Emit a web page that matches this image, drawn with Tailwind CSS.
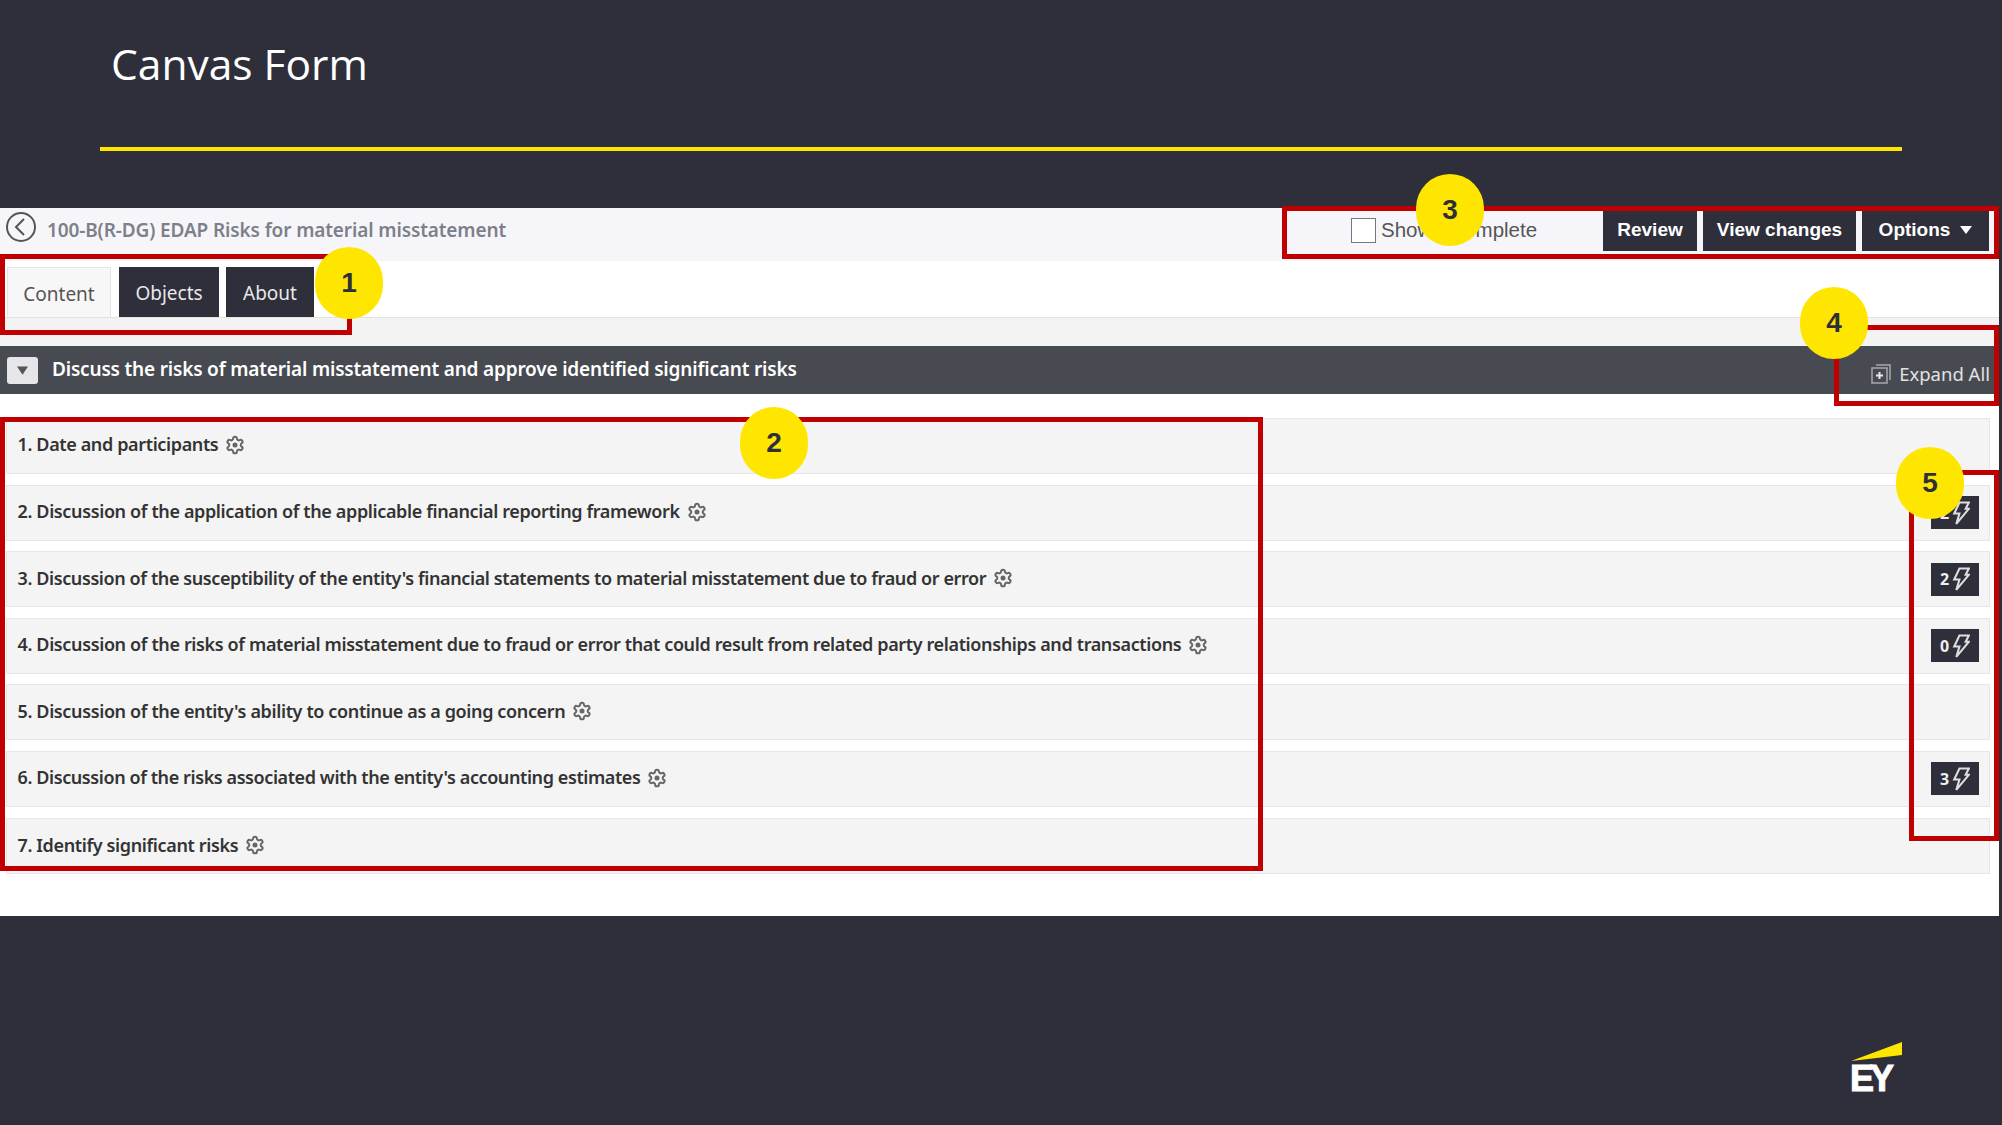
<!DOCTYPE html>
<html lang="en">
<head>
  <meta charset="UTF-8">
  <title>Canvas Form</title>
  <script src="https://cdn.jsdelivr.net/npm/@tailwindcss/browser@4"></script>
</head>
<body class="bg-[#2e2f3a] w-[2002px] h-[1125px] overflow-hidden relative font-['Noto_Sans',sans-serif]">
  <!-- slide header -->
  <header class="h-[208px] pl-[100px] pr-[100px] pt-[33px]">
    <h1 class="pl-[11px] text-[42.500px] leading-[62px] text-white font-['Open_Sans',sans-serif]">Canvas Form</h1>
    <div class="mt-[52px] h-[4px] bg-[#ffe600]"></div>
  </header>

  <!-- screenshot panel -->
  <main class="w-[1999px] h-[708px] bg-white">
    <div class="h-[53px] bg-[#f6f6fa] flex items-start pt-[3px] pl-[6px] pr-[10px]">
      <svg class="w-[30px] h-[30px] mt-[1px]" viewBox="0 0 30 30" fill="none" stroke="#555" stroke-width="2"><circle cx="15" cy="15" r="14"/><path d="M18 7l-8 8 8 8"/></svg>
      <span class="ml-[11px] leading-[38px] text-[19px] font-semibold text-[#7d8089] tracking-[-0.12px]">100-B(R-DG) EDAP Risks for material misstatement</span>
      <label class="ml-auto h-[38px] flex items-center font-['Liberation_Sans',sans-serif] text-[20.500px] text-[#555]">
        <span class="w-[25px] h-[25px] bg-white border border-[#777]"></span>
        <span class="ml-[5px] w-[222px]">Show incomplete</span>
      </label>
      <div class="flex gap-[6px] font-['Liberation_Sans',sans-serif] font-bold text-[19px] text-white">
        <button class="w-[94px] h-[40px] pb-[2px] bg-[#2e2f3a]">Review</button>
        <button class="w-[153px] h-[40px] pb-[2px] bg-[#2e2f3a]">View changes</button>
        <button class="w-[127px] h-[40px] pb-[2px] bg-[#2e2f3a] flex items-center justify-center gap-[10px]">Options
          <svg class="w-[12px] h-[8px]" viewBox="0 0 12 8" fill="#fff"><path d="M0 0h12L6 8z"/></svg>
        </button>
      </div>
    </div>

    <nav class="h-[57px] pl-[7px] flex items-end gap-[8px] border-b border-[#e2e2e2] text-[19px]">
      <a class="w-[104px] h-[50px] pt-[3px] flex items-center justify-center bg-[#f7f7f7] border border-b-0 border-[#e4e4e4] text-[#555]">Content</a>
      <a class="w-[100px] h-[50px] pt-[3px] flex items-center justify-center bg-[#2e2f3a] text-[#e8e8e8]">Objects</a>
      <a class="w-[88px] h-[50px] pt-[3px] -ml-[1px] flex items-center justify-center bg-[#2e2f3a] text-[#e8e8e8]">About</a>
    </nav>
    <div class="h-[28px] bg-[#f3f3f3]"></div>

    <div class="h-[48px] bg-[#474b51] flex items-center pl-[7px] pr-[9px]">
      <span class="w-[31px] h-[27px] rounded-[3px] bg-[#e5e5ea] flex items-center justify-center">
        <svg class="w-[11px] h-[9px]" viewBox="0 0 12 9" fill="#555"><path d="M0 0h12L6 9z"/></svg>
      </span>
      <span class="ml-[14px] pb-[2px] text-[19px] font-semibold text-white tracking-[-0.18px]">Discuss the risks of material misstatement and approve identified significant risks</span>
      <span class="ml-auto mt-[8px] flex items-center gap-[8px] text-[18.500px] text-[#e2e2e2]">
        <svg class="w-[20px] h-[20px]" viewBox="0 0 20 20" fill="none" stroke="#a5a8ad" stroke-width="1.5"><path d="M5 1h14v15"/><rect x="1" y="4" width="15" height="15"/><path d="M8.5 8v7M5 11.500h7" stroke="#e8e8e8" stroke-width="2"/></svg>
        Expand All
      </span>
    </div>

    <ul class="pt-[24px] pl-[6px] pr-[9px] flex flex-col gap-[10.600px] text-[18px] font-semibold text-[#333] tracking-[-0.37px]">
      <li class="h-[56px] bg-[#f4f4f4] border border-[#e6e6e6] pl-[10.500px] pr-[10px] flex items-center"><span class="pb-[3px] flex items-center gap-[7px]">1. Date and participants <svg class="w-[20px] h-[20px]" viewBox="0 0 24 24" fill="none" stroke="#666" stroke-width="2.400"><path d="M12.220 2h-.44a2 2 0 0 0-2 2v.18a2 2 0 0 1-1 1.730l-.43.25a2 2 0 0 1-2 0l-.15-.08a2 2 0 0 0-2.730.73l-.22.38a2 2 0 0 0 .73 2.730l.15.1a2 2 0 0 1 1 1.720v.51a2 2 0 0 1-1 1.740l-.15.09a2 2 0 0 0-.73 2.730l.22.38a2 2 0 0 0 2.730.73l.15-.08a2 2 0 0 1 2 0l.43.25a2 2 0 0 1 1 1.730V20a2 2 0 0 0 2 2h.44a2 2 0 0 0 2-2v-.18a2 2 0 0 1 1-1.730l.43-.25a2 2 0 0 1 2 0l.15.08a2 2 0 0 0 2.730-.73l.22-.39a2 2 0 0 0-.73-2.730l-.15-.08a2 2 0 0 1-1-1.740v-.5a2 2 0 0 1 1-1.740l.15-.09a2 2 0 0 0 .73-2.730l-.22-.38a2 2 0 0 0-2.730-.73l-.15.08a2 2 0 0 1-2 0l-.43-.25a2 2 0 0 1-1-1.730V4a2 2 0 0 0-2-2z"/><circle cx="12" cy="12" r="3" fill="#666" stroke="none"/></svg></span></li>
      <li class="h-[56px] bg-[#f4f4f4] border border-[#e6e6e6] pl-[10.500px] pr-[10px] flex items-center justify-between"><span class="pb-[2px] flex items-center gap-[7px]">2. Discussion of the application of the applicable financial reporting framework <svg class="w-[20px] h-[20px]" viewBox="0 0 24 24" fill="none" stroke="#666" stroke-width="2.400"><path d="M12.220 2h-.44a2 2 0 0 0-2 2v.18a2 2 0 0 1-1 1.730l-.43.25a2 2 0 0 1-2 0l-.15-.08a2 2 0 0 0-2.730.73l-.22.38a2 2 0 0 0 .73 2.730l.15.1a2 2 0 0 1 1 1.720v.51a2 2 0 0 1-1 1.740l-.15.09a2 2 0 0 0-.73 2.730l.22.38a2 2 0 0 0 2.730.73l.15-.08a2 2 0 0 1 2 0l.43.25a2 2 0 0 1 1 1.730V20a2 2 0 0 0 2 2h.44a2 2 0 0 0 2-2v-.18a2 2 0 0 1 1-1.730l.43-.25a2 2 0 0 1 2 0l.15.08a2 2 0 0 0 2.730-.73l.22-.39a2 2 0 0 0-.73-2.730l-.15-.08a2 2 0 0 1-1-1.740v-.5a2 2 0 0 1 1-1.740l.15-.09a2 2 0 0 0 .73-2.730l-.22-.38a2 2 0 0 0-2.730-.73l-.15.08a2 2 0 0 1-2 0l-.43-.25a2 2 0 0 1-1-1.730V4a2 2 0 0 0-2-2z"/><circle cx="12" cy="12" r="3" fill="#666" stroke="none"/></svg></span>
        <span class="w-[48px] h-[33px] bg-[#2e2f3a] text-[#eee] text-[16px] font-bold flex items-center justify-center gap-[3px]">2 <svg class="w-[18px] h-[24px]" viewBox="0 0 17 23" fill="none" stroke="#ddd" stroke-width="2"><path d="M7 1.500h9l-3 6h3L4 22l3-10H2z"/></svg></span></li>
      <li class="h-[56px] bg-[#f4f4f4] border border-[#e6e6e6] pl-[10.500px] pr-[10px] flex items-center justify-between"><span class="pb-[2px] flex items-center gap-[7px] tracking-[-0.4px]">3. Discussion of the susceptibility of the entity's financial statements to material misstatement due to fraud or error <svg class="w-[20px] h-[20px]" viewBox="0 0 24 24" fill="none" stroke="#666" stroke-width="2.400"><path d="M12.220 2h-.44a2 2 0 0 0-2 2v.18a2 2 0 0 1-1 1.730l-.43.25a2 2 0 0 1-2 0l-.15-.08a2 2 0 0 0-2.730.73l-.22.38a2 2 0 0 0 .73 2.730l.15.1a2 2 0 0 1 1 1.720v.51a2 2 0 0 1-1 1.740l-.15.09a2 2 0 0 0-.73 2.730l.22.38a2 2 0 0 0 2.730.73l.15-.08a2 2 0 0 1 2 0l.43.25a2 2 0 0 1 1 1.730V20a2 2 0 0 0 2 2h.44a2 2 0 0 0 2-2v-.18a2 2 0 0 1 1-1.730l.43-.25a2 2 0 0 1 2 0l.15.08a2 2 0 0 0 2.730-.73l.22-.39a2 2 0 0 0-.73-2.730l-.15-.08a2 2 0 0 1-1-1.740v-.5a2 2 0 0 1 1-1.740l.15-.09a2 2 0 0 0 .73-2.730l-.22-.38a2 2 0 0 0-2.730-.73l-.15.08a2 2 0 0 1-2 0l-.43-.25a2 2 0 0 1-1-1.730V4a2 2 0 0 0-2-2z"/><circle cx="12" cy="12" r="3" fill="#666" stroke="none"/></svg></span>
        <span class="w-[48px] h-[33px] bg-[#2e2f3a] text-[#eee] text-[16px] font-bold flex items-center justify-center gap-[3px]">2 <svg class="w-[18px] h-[24px]" viewBox="0 0 17 23" fill="none" stroke="#ddd" stroke-width="2"><path d="M7 1.500h9l-3 6h3L4 22l3-10H2z"/></svg></span></li>
      <li class="h-[56px] bg-[#f4f4f4] border border-[#e6e6e6] pl-[10.500px] pr-[10px] flex items-center justify-between"><span class="pb-[2px] flex items-center gap-[7px]">4. Discussion of the risks of material misstatement due to fraud or error that could result from related party relationships and transactions <svg class="w-[20px] h-[20px]" viewBox="0 0 24 24" fill="none" stroke="#666" stroke-width="2.400"><path d="M12.220 2h-.44a2 2 0 0 0-2 2v.18a2 2 0 0 1-1 1.730l-.43.25a2 2 0 0 1-2 0l-.15-.08a2 2 0 0 0-2.730.73l-.22.38a2 2 0 0 0 .73 2.730l.15.1a2 2 0 0 1 1 1.720v.51a2 2 0 0 1-1 1.740l-.15.09a2 2 0 0 0-.73 2.730l.22.38a2 2 0 0 0 2.730.73l.15-.08a2 2 0 0 1 2 0l.43.25a2 2 0 0 1 1 1.730V20a2 2 0 0 0 2 2h.44a2 2 0 0 0 2-2v-.18a2 2 0 0 1 1-1.730l.43-.25a2 2 0 0 1 2 0l.15.08a2 2 0 0 0 2.730-.73l.22-.39a2 2 0 0 0-.73-2.730l-.15-.08a2 2 0 0 1-1-1.740v-.5a2 2 0 0 1 1-1.740l.15-.09a2 2 0 0 0 .73-2.730l-.22-.38a2 2 0 0 0-2.730-.73l-.15.08a2 2 0 0 1-2 0l-.43-.25a2 2 0 0 1-1-1.730V4a2 2 0 0 0-2-2z"/><circle cx="12" cy="12" r="3" fill="#666" stroke="none"/></svg></span>
        <span class="w-[48px] h-[33px] bg-[#2e2f3a] text-[#eee] text-[16px] font-bold flex items-center justify-center gap-[3px]">0 <svg class="w-[18px] h-[24px]" viewBox="0 0 17 23" fill="none" stroke="#ddd" stroke-width="2"><path d="M7 1.500h9l-3 6h3L4 22l3-10H2z"/></svg></span></li>
      <li class="h-[56px] bg-[#f4f4f4] border border-[#e6e6e6] pl-[10.500px] pr-[10px] flex items-center"><span class="pb-[2px] flex items-center gap-[7px]">5. Discussion of the entity's ability to continue as a going concern <svg class="w-[20px] h-[20px]" viewBox="0 0 24 24" fill="none" stroke="#666" stroke-width="2.400"><path d="M12.220 2h-.44a2 2 0 0 0-2 2v.18a2 2 0 0 1-1 1.730l-.43.25a2 2 0 0 1-2 0l-.15-.08a2 2 0 0 0-2.730.73l-.22.38a2 2 0 0 0 .73 2.730l.15.1a2 2 0 0 1 1 1.720v.51a2 2 0 0 1-1 1.740l-.15.09a2 2 0 0 0-.73 2.730l.22.38a2 2 0 0 0 2.730.73l.15-.08a2 2 0 0 1 2 0l.43.25a2 2 0 0 1 1 1.730V20a2 2 0 0 0 2 2h.44a2 2 0 0 0 2-2v-.18a2 2 0 0 1 1-1.730l.43-.25a2 2 0 0 1 2 0l.15.08a2 2 0 0 0 2.730-.73l.22-.39a2 2 0 0 0-.73-2.730l-.15-.08a2 2 0 0 1-1-1.740v-.5a2 2 0 0 1 1-1.740l.15-.09a2 2 0 0 0 .73-2.730l-.22-.38a2 2 0 0 0-2.730-.73l-.15.08a2 2 0 0 1-2 0l-.43-.25a2 2 0 0 1-1-1.730V4a2 2 0 0 0-2-2z"/><circle cx="12" cy="12" r="3" fill="#666" stroke="none"/></svg></span></li>
      <li class="h-[56px] bg-[#f4f4f4] border border-[#e6e6e6] pl-[10.500px] pr-[10px] flex items-center justify-between"><span class="pb-[2px] flex items-center gap-[7px] tracking-[-0.41px]">6. Discussion of the risks associated with the entity's accounting estimates <svg class="w-[20px] h-[20px]" viewBox="0 0 24 24" fill="none" stroke="#666" stroke-width="2.400"><path d="M12.220 2h-.44a2 2 0 0 0-2 2v.18a2 2 0 0 1-1 1.730l-.43.25a2 2 0 0 1-2 0l-.15-.08a2 2 0 0 0-2.730.73l-.22.38a2 2 0 0 0 .73 2.730l.15.1a2 2 0 0 1 1 1.720v.51a2 2 0 0 1-1 1.740l-.15.09a2 2 0 0 0-.73 2.730l.22.38a2 2 0 0 0 2.730.73l.15-.08a2 2 0 0 1 2 0l.43.25a2 2 0 0 1 1 1.730V20a2 2 0 0 0 2 2h.44a2 2 0 0 0 2-2v-.18a2 2 0 0 1 1-1.730l.43-.25a2 2 0 0 1 2 0l.15.08a2 2 0 0 0 2.730-.73l.22-.39a2 2 0 0 0-.73-2.730l-.15-.08a2 2 0 0 1-1-1.740v-.5a2 2 0 0 1 1-1.740l.15-.09a2 2 0 0 0 .73-2.730l-.22-.38a2 2 0 0 0-2.730-.73l-.15.08a2 2 0 0 1-2 0l-.43-.25a2 2 0 0 1-1-1.730V4a2 2 0 0 0-2-2z"/><circle cx="12" cy="12" r="3" fill="#666" stroke="none"/></svg></span>
        <span class="w-[48px] h-[33px] bg-[#2e2f3a] text-[#eee] text-[16px] font-bold flex items-center justify-center gap-[3px]">3 <svg class="w-[18px] h-[24px]" viewBox="0 0 17 23" fill="none" stroke="#ddd" stroke-width="2"><path d="M7 1.500h9l-3 6h3L4 22l3-10H2z"/></svg></span></li>
      <li class="h-[56px] bg-[#f4f4f4] border border-[#e6e6e6] pl-[10.500px] pr-[10px] flex items-center"><span class="pb-[1px] flex items-center gap-[7px]">7. Identify significant risks <svg class="w-[20px] h-[20px]" viewBox="0 0 24 24" fill="none" stroke="#666" stroke-width="2.400"><path d="M12.220 2h-.44a2 2 0 0 0-2 2v.18a2 2 0 0 1-1 1.730l-.43.25a2 2 0 0 1-2 0l-.15-.08a2 2 0 0 0-2.730.73l-.22.38a2 2 0 0 0 .73 2.730l.15.1a2 2 0 0 1 1 1.720v.51a2 2 0 0 1-1 1.740l-.15.09a2 2 0 0 0-.73 2.730l.22.38a2 2 0 0 0 2.730.73l.15-.08a2 2 0 0 1 2 0l.43.25a2 2 0 0 1 1 1.730V20a2 2 0 0 0 2 2h.44a2 2 0 0 0 2-2v-.18a2 2 0 0 1 1-1.730l.43-.25a2 2 0 0 1 2 0l.15.08a2 2 0 0 0 2.730-.73l.22-.39a2 2 0 0 0-.73-2.730l-.15-.08a2 2 0 0 1-1-1.740v-.5a2 2 0 0 1 1-1.740l.15-.09a2 2 0 0 0 .73-2.730l-.22-.38a2 2 0 0 0-2.730-.73l-.15.08a2 2 0 0 1-2 0l-.43-.25a2 2 0 0 1-1-1.730V4a2 2 0 0 0-2-2z"/><circle cx="12" cy="12" r="3" fill="#666" stroke="none"/></svg></span></li>
    </ul>
  </main>

  <!-- EY logo -->
  <footer class="h-[209px] pr-[100px] pt-[126px] flex justify-end">
    <div class="w-[51px]">
      <svg class="block w-[51px] h-[19px]" viewBox="0 0 51 19" fill="#ffe600"><path d="M0 19L51 0v13z"/></svg>
      <div class="mt-[2px] -ml-[1px] text-[36px] leading-[32px] font-bold text-white font-['Liberation_Sans',sans-serif] tracking-[-4px] [-webkit-text-stroke:1px_white]">EY</div>
    </div>
  </footer>

  <!-- annotation overlays -->
  <div class="absolute left-0 top-[254px] w-[352px] h-[81px] border-[5px] border-[#c00000]"></div>
  <div class="absolute left-0 top-[417px] w-[1263px] h-[454px] border-[5px] border-[#c00000]"></div>
  <div class="absolute left-[1282px] top-[206px] w-[717px] h-[53px] border-[5px] border-[#c00000]"></div>
  <div class="absolute left-[1834px] top-[325px] w-[165px] h-[81px] border-[5px] border-[#c00000]"></div>
  <div class="absolute left-[1909px] top-[470px] w-[90px] h-[371px] border-[5px] border-[#c00000]"></div>

  <div class="absolute left-[315px] top-[247px] w-[68px] h-[72px] rounded-full bg-[#ffe600] flex items-center justify-center font-['Liberation_Sans',sans-serif] font-bold text-[28px] text-[#2e2f3a]">1</div>
  <div class="absolute left-[740px] top-[407px] w-[68px] h-[72px] rounded-full bg-[#ffe600] flex items-center justify-center font-['Liberation_Sans',sans-serif] font-bold text-[28px] text-[#2e2f3a]">2</div>
  <div class="absolute left-[1416px] top-[174px] w-[68px] h-[72px] rounded-full bg-[#ffe600] flex items-center justify-center font-['Liberation_Sans',sans-serif] font-bold text-[28px] text-[#2e2f3a]">3</div>
  <div class="absolute left-[1800px] top-[287px] w-[68px] h-[72px] rounded-full bg-[#ffe600] flex items-center justify-center font-['Liberation_Sans',sans-serif] font-bold text-[28px] text-[#2e2f3a]">4</div>
  <div class="absolute left-[1896px] top-[447px] w-[68px] h-[72px] rounded-full bg-[#ffe600] flex items-center justify-center font-['Liberation_Sans',sans-serif] font-bold text-[28px] text-[#2e2f3a]">5</div>
</body>
</html>
